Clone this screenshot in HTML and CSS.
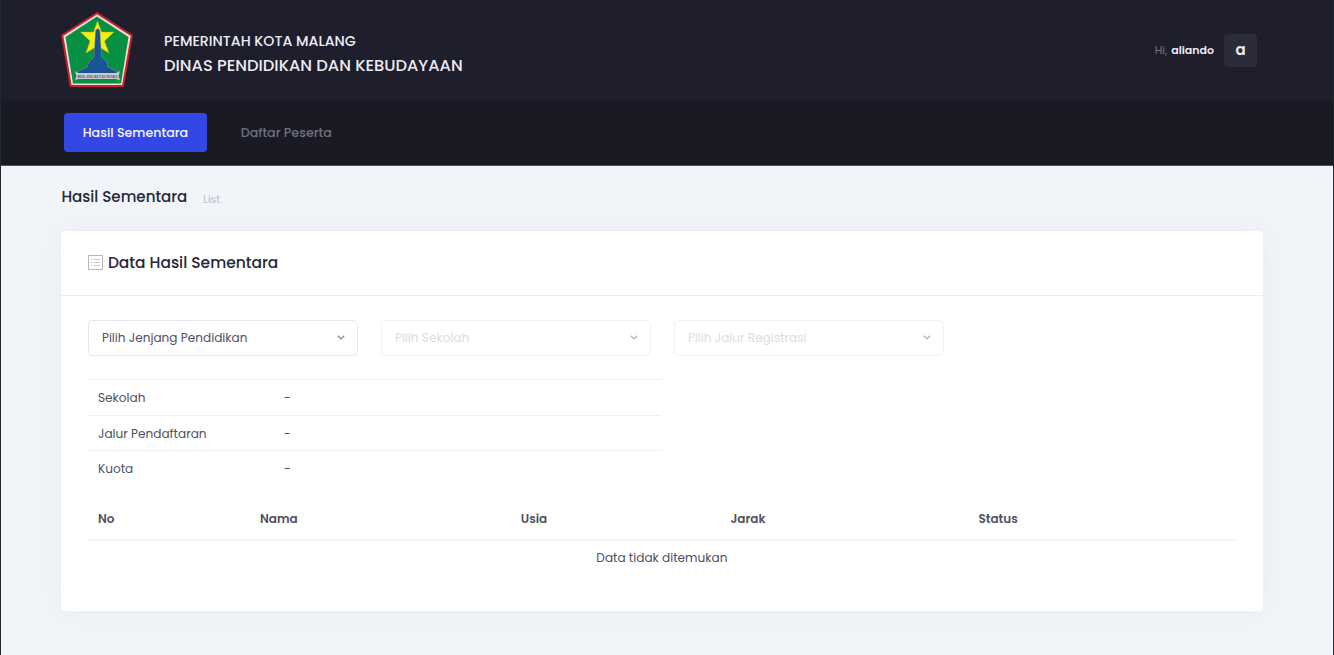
FILE: index.html
```html
<!DOCTYPE html>
<html lang="id">
<head>
<meta charset="utf-8">
<title>Hasil Sementara</title>
<link rel="stylesheet" href="styles.css">
</head>
<body>
<header class="brand">
  <svg class="logo" viewBox="0 0 72 76">
    <path d="M36 1.2 70.8 23.5 62 74H9.700L1.200 23.500Z" fill="#f1ded8" stroke="#c8202c" stroke-width="2"/>
    <path d="M36 4.500 67.500 25 60 71.500H12L4.500 25Z" fill="#078f43"/>
    <path d="M36.500 9 40.500 20H53L43.500 29 48 41 36.500 34 25 41 29 29 19.500 20H32.500Z" fill="#f5ee12" stroke="#c9a51c" stroke-width=".5"/>
    <path d="M34.500 18 37 16.500 39 18.500 40.500 45 46 50 47 55 57 60V63H16V60L26 55 28 50 33 45Z" fill="#185596" stroke="#b9a750" stroke-width=".4"/>
    <path d="M14 59 17 61H55L59 59 57.500 64 59 68.500 55 67H17L14 68.500 15.500 64Z" fill="#c9cbd0"/>
    <text x="16.500" y="66" textLength="40" lengthAdjust="spacingAndGlyphs" class="motto">MALANG KUCECWARA</text>
  </svg>
  <div class="agency">
    <div class="city">PEMERINTAH KOTA MALANG</div>
    <div class="dept">DINAS PENDIDIKAN DAN KEBUDAYAAN</div>
  </div>
  <div class="user"><span class="hi">Hi,</span><b class="name">aliando</b><span class="avatar">a</span></div>
</header>
<nav class="menu">
  <a class="item active">Hasil Sementara</a>
  <a class="item">Daftar Peserta</a>
</nav>
<main class="content">
  <div class="subheader"><h1 class="page-title">Hasil Sementara</h1><span class="crumb">List</span></div>
  <section class="card">
    <div class="card-head">
      <svg class="list-icon" viewBox="0 0 15 15" fill="none" stroke="#b5b5c3"><path d="M.500.500h14v14H.500z"/><path d="M3 4.500h1.500M6 4.500h6M3 7.500h1.500M6 7.500h6M3 10.500h1.500M6 10.500h6" stroke="#c6c6d0"/></svg>
      <h2 class="card-title">Data Hasil Sementara</h2>
    </div>
    <div class="card-body">
      <div class="filters">
        <div class="select"><span>Pilih Jenjang Pendidikan</span><svg class="chev" viewBox="0 0 8 5"><path d="M.800.800 4 3.900 7.200.800"/></svg></div>
        <div class="select disabled"><span>Pilih Sekolah</span><svg class="chev" viewBox="0 0 8 5"><path d="M.800.800 4 3.900 7.200.800"/></svg></div>
        <div class="select disabled"><span>Pilih Jalur Registrasi</span><svg class="chev" viewBox="0 0 8 5"><path d="M.800.800 4 3.900 7.200.800"/></svg></div>
      </div>
      <div class="info">
        <div class="info-row"><span>Sekolah</span><span>-</span></div>
        <div class="info-row"><span>Jalur Pendaftaran</span><span>-</span></div>
        <div class="info-row"><span>Kuota</span><span>-</span></div>
      </div>
      <div class="results-head"><span>No</span><span>Nama</span><span>Usia</span><span>Jarak</span><span>Status</span></div>
      <div class="empty">Data tidak ditemukan</div>
    </div>
  </section>
</main>
</body>
</html>
```
FILE: styles.css
```css
* { box-sizing: border-box; }
body {
  margin: 0;
  height: 655px;
  overflow: hidden;
  border-left: 1px solid #25272e;
  border-right: 1px solid #25272e;
  background: #f1f5f9;
  color: #4f5162;
  font: 12.100px/18px Poppins, Inter, "Open Sans", sans-serif;
}
h1, h2 { margin: 0; }
.brand {
  display: flex;
  align-items: center;
  height: 100px;
  padding: 0 76px 0 60px;
  background: #1e1e2d;
  color: #ececf2;
}
.logo { width: 72px; height: 76px; margin-bottom: 1px; }
.motto { font: bold 4.500px "Liberation Serif", serif; fill: #444; }
.agency { margin: 6px 0 0 31px; white-space: nowrap; font-weight: 500; }
.city { font-size: 14.200px; line-height: 24px; }
.dept { font-size: 16.300px; line-height: 25px; }
.user { display: flex; align-items: center; margin-left: auto; font-size: 11px; }
.hi { padding-bottom: 1px; color: #727285; margin-right: 4px; }
.name { padding-bottom: 1px; font-weight: 600; color: #ececf2; margin-right: 10px; }
.avatar {
  width: 33px;
  height: 33px;
  border-radius: 4px;
  background: #2b2b39;
  font-size: 15px;
  font-weight: 600;
  line-height: 31px;
  text-align: center;
}
.menu {
  display: flex;
  align-items: center;
  gap: 15px;
  height: 66px;
  padding-left: 63.400px;
  border-bottom: 1px solid #55505d;
  background: #1a1a24;
}
.item {
  height: 39px;
  padding: 0 18.300px;
  border-radius: 4px;
  color: #6f7082;
  font-size: 12.650px;
  font-weight: 500;
  line-height: 39px;
  white-space: nowrap;
}
.active { width: 143px; background: #3347e4; color: #f4f5ff; }
.content { padding: 0 69px 0 60.400px; }
.subheader { display: flex; align-items: center; height: 65px; padding-bottom: 3px; }
.page-title { color: #252838; font-size: 15.100px; font-weight: 500; }
.crumb { margin: 3px 0 0 15.800px; color: #babbc8; font-size: 11px; }
.card {
  width: 1202px;
  height: 380px;
  border-radius: 4px;
  background: #fff;
  box-shadow: 0 0 30px rgba(82, 63, 105, .05);
}
.card-head {
  display: flex;
  align-items: center;
  height: 65px;
  padding: 0 27px 2px;
  border-bottom: 1px solid #ebedf1;
}
.list-icon { width: 15px; height: 15px; margin-right: 4.500px; }
.card-title { padding-top: 1px; color: #252838; font-size: 15.450px; font-weight: 500; }
.card-body { padding: 24px 27px; }
.filters { display: flex; gap: 23px; }
.select {
  display: flex;
  align-items: center;
  justify-content: space-between;
  width: 270px;
  height: 36px;
  padding: 0 12px 0 12.500px;
  border: 1px solid #e4e6ed;
  border-radius: 5px;
}
.chev { width: 8px; height: 5px; margin-top: -1px; fill: none; stroke: #838591; stroke-width: 1.300; }
.disabled { border-color: #f1f2f5; color: #dcdde4; }
.disabled .chev { stroke: #b1b2bb; }
.info { width: 573.500px; margin-top: 23px; }
.info-row {
  display: grid;
  grid-template-columns: 186px 1fr;
  height: 35.500px;
  padding-left: 9.600px;
  border-top: 1px solid #eeeff3;
  line-height: 35px;
}
.results-head {
  display: grid;
  grid-template-columns: 162px 260.800px 209.700px 248px 1fr;
  height: 55px;
  width: 1148px;
  padding-left: 9.600px;
  border-bottom: 2px solid #f3f4f6;
  font-size: 12px;
  font-weight: 600;
  line-height: 66px;
}
.empty { width: 1147px; line-height: 34px; text-align: center; }
```
